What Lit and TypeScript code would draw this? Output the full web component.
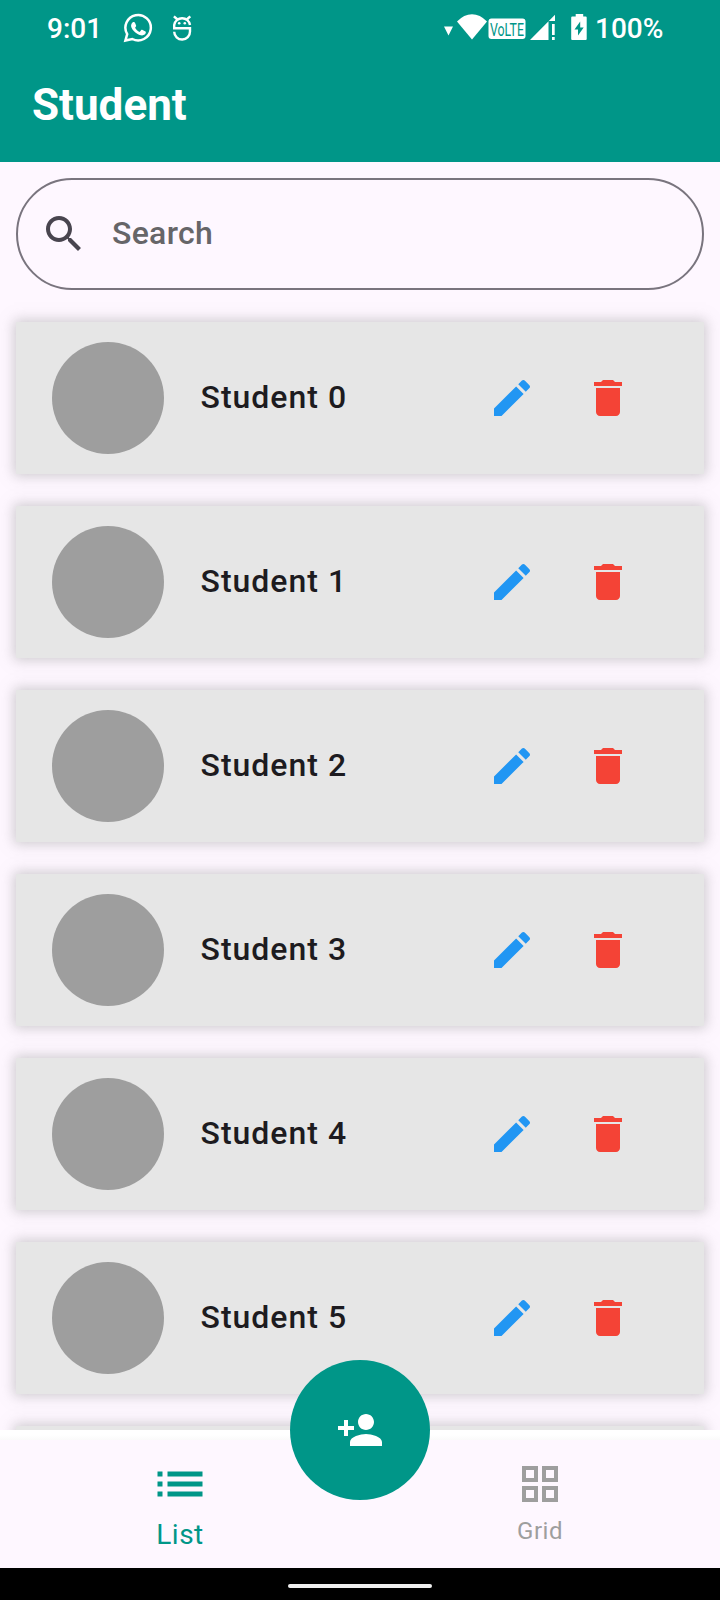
import { LitElement, html, css, svg } from "lit";
import { customElement, property } from "lit/decorators.js";

const paths = {
  search: "M15.5 14h-.79l-.28-.27C15.41 12.59 16 11.11 16 9.5 16 5.91 13.09 3 9.5 3S3 5.91 3 9.5 5.91 16 9.5 16c1.61 0 3.09-.59 4.23-1.57l.27.28v.79l5 4.99L20.49 19l-4.99-5zm-6 0C7.01 14 5 11.99 5 9.5S7.01 5 9.5 5 14 7.01 14 9.5 11.99 14 9.5 14z",
  edit: "M3 17.25V21h3.75L17.81 9.94l-3.75-3.75L3 17.25zM20.71 7.04c.39-.39.39-1.02 0-1.41l-2.34-2.34c-.39-.39-1.02-.39-1.41 0l-1.83 1.83 3.75 3.75 1.83-1.83z",
  trash: "M6 19c0 1.1.9 2 2 2h8c1.1 0 2-.9 2-2V7H6v12zM19 4h-3.5l-1-1h-5l-1 1H5v2h14V4z",
  personAdd: "M15 12c2.21 0 4-1.79 4-4s-1.79-4-4-4-4 1.79-4 4 1.79 4 4 4zm-9-2V7H4v3H1v2h3v3h2v-3h3v-2H6zm9 4c-2.67 0-8 1.34-8 4v2h16v-2c0-2.66-5.33-4-8-4z",
  list: "M3 13h2v-2H3v2zm0 4h2v-2H3v2zm0-8h2V7H3v2zm4 4h14v-2H7v2zm0 4h14v-2H7v2zM7 7v2h14V7H7z",
  grid: "M3 3v8h8V3H3zm6 6H5V5h4v4zm-6 4v8h8v-8H3zm6 6H5v-4h4v4zm4-16v8h8V3h-8zm6 6h-4V5h4v4zm-6 4v8h8v-8h-8zm6 6h-4v-4h4v4z",
};

const icon = (name: keyof typeof paths) =>
  html`<svg class="icon ${name}" viewBox="0 0 24 24">${svg`<path d=${paths[name]}></path>`}</svg>`;

@customElement("status-bar")
class StatusBar extends LitElement {
  static styles = css`
    :host { display: flex; align-items: flex-start; box-sizing: border-box; height: 57px; color: #fff; font-size: 28px; font-weight: 500; }
    span { line-height: 58px; }
    svg { display: block; height: 56px; flex: none; }
    .time { width: 76px; margin-left: 47px; }
    .left { width: 80px; }
    .right { width: 155px; margin-left: 237px; overflow: visible; }
    .volte { font-size: 19px; font-weight: 400; }
  `;
  render() {
    return html`
      <span class="time">9:01</span>
      <svg class="left" viewBox="123 0 80 56">
        <path d="M125.400 40.500l1.800-6.300A12.700 12.700 0 1 1 132.300 39z" fill="none" stroke="#fff" stroke-width="2.500"></path>
        <path d="M132.500 22.500c1.200-.8 2.200-.5 2.600.5l1 2.600c.2.800-.2 1.200-1 2.100.9 2 2.500 3.300 4.600 4.200l1.500-1.800c.4-.4.8-.4 1.400-.1l2.900 1.500c.7.4.3 2.300-.8 3.100-2.200 1.500-4.700.7-7.500-.8-2.800-1.500-6-5.100-6.100-7.700-.1-1.300.4-2.600 1.400-3.600z" fill="#fff"></path>
        <g fill="none" stroke="#fff" stroke-width="2.400">
          <path d="M190 25A8 8 0 0 0 174.200 25V28.300H190V31.500A7.900 7.900 0 0 1 174.200 31.800"></path>
          <path d="M177.500 19.500l-3.600-3.200M186.700 19.500l3.600-3.200"></path>
        </g>
        <circle cx="179.200" cy="23.300" r="1.300" fill="#fff"></circle>
        <circle cx="184.800" cy="23.300" r="1.300" fill="#fff"></circle>
      </svg>
      <svg class="right" viewBox="440 0 155 56" fill="#fff">
        <path d="M444 26.500h9l-4.500 9z"></path>
        <path d="M457 21.500Q464 14.200 472 14.200T487 21.500L472 39.500z"></path>
        <rect x="488.500" y="18.500" width="37" height="20.500" rx="3"></rect>
        <text class="volte" x="490" y="36" textLength="34" lengthAdjust="spacingAndGlyphs" fill="#009688">VoLTE</text>
        <path d="M530 40L555 14.700V21h-6.500v19z"></path>
        <path d="M552 24h2.700v11h-2.700zM552 37h2.700v3h-2.700z"></path>
        <path d="M572.200 16.500h3.500V14h7.500v2.500h2.500q1 0 1 1V39q0 1-1 1h-13.500q-1 0-1-1V17.500q0-1 1-1z"></path>
        <path d="M580.200 21.500l-5.700 8h3.500v6l5.700-8h-3.500z" fill="#009688"></path>
      </svg>
      <span>100%</span>
    `;
  }
}

@customElement("student-card")
class StudentCard extends LitElement {
  @property() name = "";
  static styles = css`
    :host { display: flex; align-items: center; flex: none; box-sizing: border-box; height: 152px; padding: 0 72px 0 36px; background: #e6e6e6; box-shadow: 0 0 12px 2px rgba(158, 158, 158, 0.5); }
    .avatar { width: 112px; height: 112px; border-radius: 50%; background: #9e9e9e; margin-right: 36.5px; }
    .name { flex: 1; color: #1d1b20; font-size: 32px; font-weight: 500; letter-spacing: 1px; line-height: 48px; margin-top: -2px; }
    .icon { width: 48px; height: 48px; }
    .edit { fill: #2196f3; margin-right: 48px; }
    .trash { fill: #f44336; }
  `;
  render() {
    return html`<div class="avatar"></div><div class="name">${this.name}</div>${icon("edit")}${icon("trash")}`;
  }
}

@customElement("app-root")
class AppRoot extends LitElement {
  static styles = css`
    :host { display: flex; flex-direction: column; width: 720px; height: 1600px; overflow: hidden; position: relative; background: #fef7ff; font-family: Roboto, sans-serif; }
    .header { height: 162px; background: #009688; flex: none; }
    .title { margin: 0; padding: 20px 0 0 32px; color: #fff; font-size: 44px; line-height: 56px; font-weight: 700; }
    .search-box { display: flex; align-items: center; box-sizing: border-box; flex: none; height: 112px; margin: 16px 16px 0; padding-left: 22px; border: 2px solid #79747e; border-radius: 56px; }
    .search { width: 48px; height: 48px; fill: #49454f; }
    .placeholder { margin-left: 24px; color: #666568; font-size: 32px; font-weight: 500; letter-spacing: 0.3px; margin-top: -2px; }
    .cards { flex: 1; min-height: 0; overflow: hidden; margin-top: 10px; padding: 22px 16px 0; display: flex; flex-direction: column; gap: 32px; }
    .strip { height: 10px; flex: none; background: linear-gradient(#fff 50%, #fafafa); }
    .nav { display: grid; grid-template-columns: 1fr 1fr; height: 128px; flex: none; }
    .tab { display: flex; flex-direction: column; align-items: center; }
    .list { width: 60px; height: 60px; margin-top: 14px; }
    .grid { width: 48px; height: 48px; margin-top: 20px; }
    .active { color: #009688; fill: #009688; font-size: 28px; letter-spacing: 0.5px; }
    .idle { color: #9e9e9e; fill: #9e9e9e; font-size: 24px; letter-spacing: 0.5px; }
    .label { line-height: 40px; margin-top: 1px; }
    .idle .label { margin-top: 3px; }
    .system { height: 32px; flex: none; background: #000; display: flex; justify-content: center; align-items: center; }
    .handle { width: 144px; height: 4px; margin-top: 4px; border-radius: 2px; background: #f0f0f0; }
    .fab { position: absolute; left: 290px; top: 1360px; width: 140px; height: 140px; border-radius: 50%; border: 0; padding: 0; background: #009688; display: flex; align-items: center; justify-content: center; }
    .personAdd { width: 48px; height: 48px; fill: #fff; }
  `;
  render() {
    return html`
      <div class="header">
        <status-bar></status-bar>
        <h1 class="title">Student</h1>
      </div>
      <div class="search-box">${icon("search")}<span class="placeholder">Search</span></div>
      <div class="cards">
        ${[0, 1, 2, 3, 4, 5].map((n) => html`<student-card name="Student ${n}"></student-card>`)}
        <student-card></student-card>
      </div>
      <div class="strip"></div>
      <div class="nav">
        <div class="tab active">${icon("list")}<span class="label">List</span></div>
        <div class="tab idle">${icon("grid")}<span class="label">Grid</span></div>
      </div>
      <div class="system"><div class="handle"></div></div>
      <button class="fab" aria-label="Add student">${icon("personAdd")}</button>
    `;
  }
}
